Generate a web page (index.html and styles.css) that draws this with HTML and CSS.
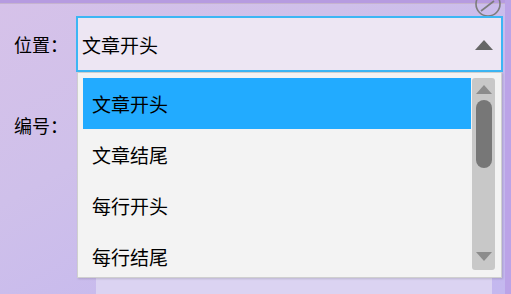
FILE: index.html
```html
<!DOCTYPE html>
<html lang="zh">

<head>
    <meta charset="UTF-8">
    <meta name="viewport" content="width=device-width, initial-scale=1.0">
    <title>编号设置</title>

    <link rel="stylesheet" href="styles.css">
</head>

<body>
    <div class="window">
        <div class="topBar"></div>
        <svg class="cornerBtn" width="30" height="20" viewBox="0 0 30 20">
            <circle cx="14" cy="4" r="12" fill="none" stroke="#7c7c7c" stroke-width="1.6"/>
            <line x1="7" y1="11" x2="20" y2="1" stroke="#7c7c7c" stroke-width="1.6"/>
        </svg>
        <div class="form">
            <div class="row">
                <span class="label">位置：</span>
                <div class="combo">
                    <span class="comboText">文章开头</span>
                    <span class="arrowUp"></span>
                    <div class="dropList">
                        <ul class="items">
                            <li class="selected">文章开头</li>
                            <li>文章结尾</li>
                            <li>每行开头</li>
                            <li>每行结尾</li>
                        </ul>
                        <div class="scrollBar">
                            <span class="sbUp"></span>
                            <span class="sbThumb"></span>
                            <span class="sbDown"></span>
                        </div>
                    </div>
                </div>
            </div>
            <div class="row row2">
                <span class="label">编号：</span>
            </div>
            <div class="panel"></div>
        </div>
    </div>
</body>

</html>
```

FILE: styles.css
```css
*{margin: 0px;padding: 0px;box-sizing: border-box;font-family: "Noto Sans CJK SC", "Noto Sans", sans-serif;color: #000;}
body{width: 511px;height: 294px;overflow: hidden;}
.window{position: relative;width: 511px;height: 294px;overflow: hidden;border-right: 6px solid #bba3e7;
    background: linear-gradient(150deg, #d6c2e9 0%, #cfc0ea 35%, #c6b9ee 70%, #c4b8ef 100%);}
.topBar{height: 4px;background: #b69be0;border-bottom: 1px solid #c5b3cf;}
.cornerBtn{position: absolute;top: 0px;left: 474px;}
.form{padding: 12px 0px 0px 14px;}
.row{display: flex;align-items: center;height: 56px;}
.label{width: 62px;font-size: 18px;line-height: 20px;}
.combo{position: relative;width: 427px;height: 56px;background: #ede6f3;border: 2px solid #3cb6f4;display: flex;align-items: center;padding: 0px 8px 0px 4px;}
.comboText{flex: 1;font-size: 19px;}
.arrowUp{width: 0px;height: 0px;border-left: 9px solid transparent;border-right: 9px solid transparent;border-bottom: 10px solid #666;margin-top: 1px;}
.dropList{position: absolute;top: 54px;left: -1px;width: 425px;height: 206px;background: #f3f3f3;border: 1px solid #cfcfcf;padding: 5px 6px 5px 5px;display: flex;gap: 1px;box-shadow: 1px 1px 2px rgba(0,0,0,0.15);}
.items{list-style-type: none;flex: 1;overflow: hidden;}
.items li{height: 51px;line-height: 51px;padding-left: 9px;font-size: 19px;}
.items li.selected{background: #22abff;}
.scrollBar{width: 23px;height: 192px;background: #c8c8c8;border-radius: 3px;display: flex;flex-direction: column;align-items: center;padding-top: 7px;}
.sbUp{width: 0px;height: 0px;border-left: 8px solid transparent;border-right: 8px solid transparent;border-bottom: 9px solid #8c8c8c;}
.sbThumb{width: 16px;height: 68px;margin-top: 6px;background: #777;border-radius: 8px;}
.sbDown{width: 0px;height: 0px;margin-top: 84px;border-left: 8px solid transparent;border-right: 8px solid transparent;border-top: 9px solid #8c8c8c;}
.row2{margin-top: 33px;height: 40px;}
.panel{margin: 113px 0px 0px 82px;width: 396px;height: 60px;background: #dbd3f2;}
```
